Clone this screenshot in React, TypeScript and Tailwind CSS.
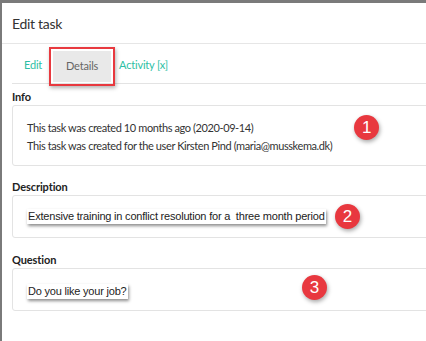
import type { ReactNode } from 'react';

function Badge({ n, className }: { n: number; className: string }) {
  return (
    <span
      className={`absolute flex size-[25px] items-center justify-center rounded-full bg-[#e8383f] text-[17px] text-white shadow-[1px_2px_4px_rgba(0,0,0,0.35)] ${className}`}
      style={{ fontFamily: '"Liberation Sans", Arial, sans-serif' }}
    >
      {n}
    </span>
  );
}

function Sticker({ children }: { children: ReactNode }) {
  return (
    <span
      className="whitespace-nowrap bg-white px-[1px] text-[11px] leading-[15px] tracking-[-0.2px] text-[#222] shadow-[1px_2px_3px_rgba(0,0,0,0.45)]"
      style={{ fontFamily: '"Liberation Sans", Arial, sans-serif' }}
    >
      {children}
    </span>
  );
}

function Section({ label, children, className }: { label: string; children: ReactNode; className: string }) {
  return (
    <div>
      <p className="text-[11px] font-bold leading-[15px] tracking-[-0.1px] text-[#222]">{label}</p>
      <div className={`relative mt-[1px] rounded-[3px] border border-[#e3e3e3] ${className}`}>{children}</div>
    </div>
  );
}

export default function App() {
  return (
    <div className="h-[341px] w-[426px] overflow-hidden bg-[#7a7a7a] pl-[2px] pt-[3px]" style={{ fontFamily: 'Lato, "Open Sans", sans-serif' }}>
      <div className="h-full w-[460px] bg-white">
        <div className="flex h-[41px] items-center border-b border-[#e6e6e6] pl-[10px] text-[14px] tracking-[-0.3px] text-[#333]">Edit task</div>

        <div className="ml-[10px] flex h-[40px] items-end border-b border-[#e3e3e3] text-[11px] tracking-[-0.2px]">
          <span className="mb-[10px] ml-[12px] text-[#2dbfa5]">Edit</span>
          <div className="relative mb-[-3px] ml-[7px] border-2 border-[#e8393f] p-[2px] shadow-[1px_2px_4px_rgba(0,0,0,0.3)]">
            <div className="flex h-[31px] w-[58px] items-center justify-center bg-[#e9e9e9] text-[#666]">Details</div>
          </div>
          <span className="mb-[10px] ml-[4px] text-[#2dbfa5]">Activity [x]</span>
        </div>

        <div className="flex flex-col pl-[10px] pt-[5px]">
          <Section label="Info" className="h-[61px] px-[14px] pt-[13px] text-[11px] leading-[18px] tracking-[-0.4px] text-[#333]">
            <p>This task was created 10 months ago (2020-09-14)</p>
            <p>This task was created for the user Kirsten Pind (maria@musskema.dk)</p>
            <Badge n={1} className="left-[341px] top-[9px]" />
          </Section>

          <div className="mt-[13px]">
            <Section label="Description" className="flex h-[43px] items-center px-[14px]">
              <Sticker>Extensive training in conflict resolution for a&nbsp; three month period</Sticker>
              <Badge n={2} className="left-[322px] top-[8px]" />
            </Section>
          </div>

          <div className="mt-[14px]">
            <Section label="Question" className="flex h-[43px] items-center px-[14px] pt-[4px]">
              <Sticker>Do you like your job?</Sticker>
              <Badge n={3} className="left-[289px] top-[6px]" />
            </Section>
          </div>
        </div>
      </div>
    </div>
  );
}
